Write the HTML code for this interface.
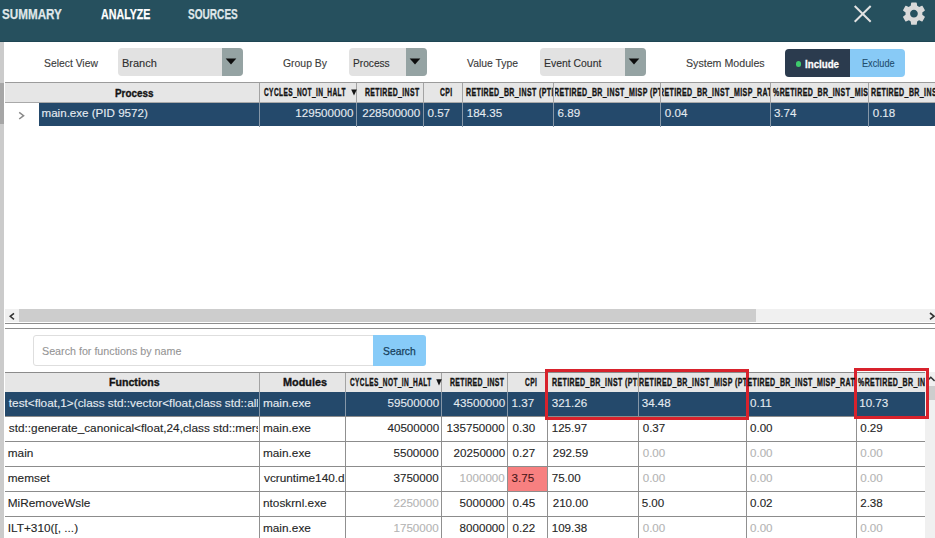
<!DOCTYPE html>
<html><head><meta charset="utf-8">
<style>
*{margin:0;padding:0;box-sizing:border-box}
html,body{width:935px;height:538px;overflow:hidden;background:#fff;font-family:"Liberation Sans", sans-serif;position:relative}
.a{position:absolute}
.t{position:absolute;white-space:nowrap;line-height:1;transform-origin:0 0}
</style></head><body>
<div class="a" style="left:0px;top:0px;width:935px;height:42.2px;background:#26505e;"></div>
<div class="a" style="left:0px;top:41.2px;width:935px;height:1px;background:#1f4654;"></div>
<svg class="a" style="left:850px;top:2px" width="26" height="26" viewBox="0 0 26 26"><path d="M4.7 4.0 L20.7 19.8 M20.7 4.0 L4.7 19.8" stroke="#e2e2e2" stroke-width="2" fill="none"/></svg>
<svg class="a" style="left:0;top:0" width="935" height="30"><path transform="translate(899.9 -0.4) scale(1.17)" fill="#d9d9d9" d="M19.14,12.94c0.04-0.3,0.06-0.61,0.06-0.94c0-0.32-0.02-0.64-0.07-0.94l2.03-1.58c0.18-0.14,0.23-0.41,0.12-0.61 l-1.92-3.32c-0.12-0.22-0.37-0.29-0.59-0.22l-2.39,0.96c-0.5-0.38-1.03-0.7-1.62-0.94L14.4,2.81c-0.04-0.24-0.24-0.41-0.48-0.41 h-3.84c-0.24,0-0.43,0.17-0.47,0.41L9.25,5.35C8.66,5.59,8.12,5.92,7.630,6.29L5.24,5.33c-0.22-0.08-0.47,0-0.59,0.22L2.74,8.87 C2.62,9.08,2.66,9.34,2.86,9.48l2.03,1.58C4.84,11.36,4.8,11.69,4.8,12s0.02,0.64,0.07,0.94l-2.03,1.58 c-0.18,0.14-0.23,0.41-0.12,0.61l1.92,3.32c0.12,0.22,0.37,0.29,0.59,0.22l2.39-0.96c0.5,0.38,1.03,0.7,1.62,0.94l0.36,2.54 c0.05,0.24,0.24,0.41,0.48,0.41h3.84c0.24,0,0.44-0.17,0.47-0.41l0.36-2.54c0.59-0.24,1.130-0.56,1.62-0.94l2.39,0.96 c0.22,0.08,0.47,0,0.59-0.22l1.92-3.32c0.12-0.22,0.07-0.47-0.12-0.61L19.14,12.94z M12,15.3c-1.82,0-3.3-1.48-3.3-3.3 s1.48-3.3,3.3-3.3s3.3,1.48,3.3,3.3S13.82,15.3,12,15.3z"/></svg>
<div class="a" style="left:0px;top:42px;width:4px;height:496px;background:#cbcbcb;"></div>
<div class="a" style="left:0px;top:82.5px;width:4px;height:41px;background:#a6a6a6;"></div>
<div class="a" style="left:118.3px;top:48px;width:124.7px;height:28px;background:#e2e2e2;border-radius:4px;"></div>
<div class="a" style="left:222px;top:48px;width:21px;height:28px;background:#95a3a3;border-radius:0 4px 4px 0;"></div>
<svg class="a" style="left:225.4px;top:58px" width="12" height="8"><path d="M0.7 0.4 L11.3 0.4 L6 6.4 Z" fill="#0d0d0d"/></svg>
<div class="a" style="left:349.1px;top:48px;width:77.69999999999999px;height:28px;background:#e2e2e2;border-radius:4px;"></div>
<div class="a" style="left:405.8px;top:48px;width:21.0px;height:28px;background:#95a3a3;border-radius:0 4px 4px 0;"></div>
<svg class="a" style="left:409.2px;top:58px" width="12" height="8"><path d="M0.7 0.4 L11.3 0.4 L6 6.4 Z" fill="#0d0d0d"/></svg>
<div class="a" style="left:540.1px;top:48px;width:105.89999999999998px;height:28px;background:#e2e2e2;border-radius:4px;"></div>
<div class="a" style="left:625.1px;top:48px;width:20.899999999999977px;height:28px;background:#95a3a3;border-radius:0 4px 4px 0;"></div>
<svg class="a" style="left:628.4499999999999px;top:58px" width="12" height="8"><path d="M0.7 0.4 L11.3 0.4 L6 6.4 Z" fill="#0d0d0d"/></svg>
<div class="a" style="left:785px;top:48.5px;width:65px;height:28px;background:#2b3b4e;border-radius:4px 0 0 4px;"></div>
<div class="a" style="left:850px;top:48.5px;width:55px;height:28px;background:#88caf6;border-radius:0 4px 4px 0;"></div>
<div class="a" style="left:796.2px;top:61.4px;width:5.2px;height:5.2px;border-radius:50%;background:#3ecb6c"></div>
<div class="a" style="left:4.5px;top:82px;width:930.5px;height:1.5px;background:#9b9b9b;"></div>
<div class="a" style="left:4.5px;top:83.2px;width:930.5px;height:18.4px;background:#e6e6e6;"></div>
<div class="a" style="left:4.5px;top:101.5px;width:930.5px;height:1.2px;background:#a9a9a9;"></div>
<div class="a" style="left:38.8px;top:102.5px;width:896.2px;height:23.8px;background:#24496b;"></div>
<div class="a" style="left:259px;top:83px;width:1.2px;height:18.6px;background:#a3a3a3;"></div>
<div class="a" style="left:259px;top:102.5px;width:1.2px;height:24.5px;background:#8697a8;"></div>
<div class="a" style="left:355.8px;top:83px;width:1.2px;height:18.6px;background:#a3a3a3;"></div>
<div class="a" style="left:355.8px;top:102.5px;width:1.2px;height:24.5px;background:#8697a8;"></div>
<div class="a" style="left:422.6px;top:83px;width:1.2px;height:18.6px;background:#a3a3a3;"></div>
<div class="a" style="left:422.6px;top:102.5px;width:1.2px;height:24.5px;background:#8697a8;"></div>
<div class="a" style="left:462.3px;top:83px;width:1.2px;height:18.6px;background:#a3a3a3;"></div>
<div class="a" style="left:462.3px;top:102.5px;width:1.2px;height:24.5px;background:#8697a8;"></div>
<div class="a" style="left:553.2px;top:83px;width:1.2px;height:18.6px;background:#a3a3a3;"></div>
<div class="a" style="left:553.2px;top:102.5px;width:1.2px;height:24.5px;background:#8697a8;"></div>
<div class="a" style="left:660.2px;top:83px;width:1.2px;height:18.6px;background:#a3a3a3;"></div>
<div class="a" style="left:660.2px;top:102.5px;width:1.2px;height:24.5px;background:#8697a8;"></div>
<div class="a" style="left:770.2px;top:83px;width:1.2px;height:18.6px;background:#a3a3a3;"></div>
<div class="a" style="left:770.2px;top:102.5px;width:1.2px;height:24.5px;background:#8697a8;"></div>
<div class="a" style="left:867.8px;top:83px;width:1.2px;height:18.6px;background:#a3a3a3;"></div>
<div class="a" style="left:867.8px;top:102.5px;width:1.2px;height:24.5px;background:#8697a8;"></div>
<svg class="a" style="left:350.6px;top:89.3px" width="7" height="7"><path d="M0.2 0.5 L5.8 0.5 L3.0 6.5 Z" fill="#141414"/></svg>
<svg class="a" style="left:16px;top:109px" width="11" height="13"><path d="M3.2 3.3 L7.6 6.65 L3.2 10" stroke="#8a8a8a" stroke-width="1.5" fill="none"/></svg>
<div class="a" style="left:4.5px;top:309px;width:930.5px;height:13.2px;background:#f0f0f0;"></div>
<div class="a" style="left:19.3px;top:309px;width:736.3px;height:13.2px;background:#cdcdcd;"></div>
<svg class="a" style="left:6px;top:310px" width="12" height="12"><path d="M8 3.3 L4.2 6.3 L8 9.3" stroke="#333" stroke-width="1.5" fill="none"/></svg>
<svg class="a" style="left:925px;top:310px" width="10" height="12"><path d="M5 3 L9 6.2 L5 9.4" stroke="#333" stroke-width="1.7" fill="none"/></svg>
<div class="a" style="left:4.5px;top:323.2px;width:930.5px;height:1.2px;background:#8e8e8e;"></div>
<div class="a" style="left:4.5px;top:327.6px;width:930.5px;height:1.2px;background:#8e8e8e;"></div>
<div class="a" style="left:33.2px;top:334.7px;width:342px;height:31.2px;border:1px solid #dedede;border-radius:3px 0 0 3px;background:#fff"></div>
<div class="a" style="left:373.4px;top:334.8px;width:52.4px;height:31.2px;background:#87cbf8;border-radius:0 3px 3px 0;"></div>
<div class="a" style="left:4.5px;top:371.8px;width:920.5px;height:1.3px;background:#8b8b8b;"></div>
<div class="a" style="left:4.5px;top:373.1px;width:920.5px;height:18.5px;background:#e6e6e6;"></div>
<div class="a" style="left:4.5px;top:391.6px;width:920.5px;height:1px;background:#f2f2f2;"></div>
<div class="a" style="left:4.5px;top:392.3px;width:920.5px;height:24px;background:#24496b;"></div>
<div class="a" style="left:258.9px;top:373px;width:1.3px;height:19px;background:#a3a3a3;"></div>
<div class="a" style="left:258.9px;top:392.3px;width:1.3px;height:24px;background:#8697a8;"></div>
<div class="a" style="left:258.9px;top:416.3px;width:1.1px;height:122px;background:#909090;"></div>
<div class="a" style="left:344.6px;top:373px;width:1.3px;height:19px;background:#a3a3a3;"></div>
<div class="a" style="left:344.6px;top:392.3px;width:1.3px;height:24px;background:#8697a8;"></div>
<div class="a" style="left:344.6px;top:416.3px;width:1.1px;height:122px;background:#909090;"></div>
<div class="a" style="left:440.5px;top:373px;width:1.3px;height:19px;background:#a3a3a3;"></div>
<div class="a" style="left:440.5px;top:392.3px;width:1.3px;height:24px;background:#8697a8;"></div>
<div class="a" style="left:440.5px;top:416.3px;width:1.1px;height:122px;background:#909090;"></div>
<div class="a" style="left:507.0px;top:373px;width:1.3px;height:19px;background:#a3a3a3;"></div>
<div class="a" style="left:507.0px;top:392.3px;width:1.3px;height:24px;background:#8697a8;"></div>
<div class="a" style="left:507.0px;top:416.3px;width:1.1px;height:122px;background:#909090;"></div>
<div class="a" style="left:547px;top:373px;width:1.3px;height:19px;background:#a3a3a3;"></div>
<div class="a" style="left:547px;top:392.3px;width:1.3px;height:24px;background:#8697a8;"></div>
<div class="a" style="left:547px;top:416.3px;width:1.1px;height:122px;background:#909090;"></div>
<div class="a" style="left:638.2px;top:373px;width:1.3px;height:19px;background:#a3a3a3;"></div>
<div class="a" style="left:638.2px;top:392.3px;width:1.3px;height:24px;background:#8697a8;"></div>
<div class="a" style="left:638.2px;top:416.3px;width:1.1px;height:122px;background:#909090;"></div>
<div class="a" style="left:745.8px;top:373px;width:1.3px;height:19px;background:#a3a3a3;"></div>
<div class="a" style="left:745.8px;top:392.3px;width:1.3px;height:24px;background:#8697a8;"></div>
<div class="a" style="left:745.8px;top:416.3px;width:1.1px;height:122px;background:#909090;"></div>
<div class="a" style="left:855.5px;top:373px;width:1.3px;height:19px;background:#a3a3a3;"></div>
<div class="a" style="left:855.5px;top:392.3px;width:1.3px;height:24px;background:#8697a8;"></div>
<div class="a" style="left:855.5px;top:416.3px;width:1.1px;height:122px;background:#909090;"></div>
<div class="a" style="left:4.5px;top:440.7px;width:920.5px;height:1.3px;background:#8c8c8c;"></div>
<div class="a" style="left:4.5px;top:465.7px;width:920.5px;height:1.3px;background:#8c8c8c;"></div>
<div class="a" style="left:4.5px;top:490.7px;width:920.5px;height:1.3px;background:#8c8c8c;"></div>
<div class="a" style="left:4.5px;top:515.6px;width:920.5px;height:1.3px;background:#8c8c8c;"></div>
<div class="a" style="left:4.5px;top:416.0px;width:920.5px;height:0.8px;background:#8c8c8c;"></div>
<div class="a" style="left:508.2px;top:467.3px;width:38.8px;height:23.6px;background:#f78080;"></div>
<svg class="a" style="left:435.8px;top:378.9px" width="7" height="7"><path d="M0.2 0.3 L5.8 0.3 L3.0 6.6 Z" fill="#141414"/></svg>
<div class="a" style="left:925px;top:372px;width:10px;height:166px;background:#f0f0f0;"></div>
<div class="a" style="left:926px;top:386px;width:9px;height:14px;background:#cdcdcd;"></div>
<svg class="a" style="left:925px;top:374px" width="10" height="10"><path d="M2 7 L5.8 3.2 L9.6 7" stroke="#333" stroke-width="1.5" fill="none"/></svg>
<div class="a" style="left:545px;top:369.3px;width:203.6px;height:50.5px;border:3px solid #d8222c"></div>
<div class="a" style="left:853.8px;top:368.2px;width:75.5px;height:51px;border:3px solid #d8222c"></div>
<div class="t" style="left:2.48px;top:6px;font-size:15.2px;font-weight:700;color:#dfe6e9;transform:scaleX(0.7682);-webkit-text-stroke:0.25px #dfe6e9;">SUMMARY</div>
<div class="t" style="left:101.10px;top:6px;font-size:15.2px;font-weight:700;color:#ffffff;transform:scaleX(0.7029);-webkit-text-stroke:0.25px #fff;">ANALYZE</div>
<div class="t" style="left:187.84px;top:6px;font-size:15.2px;font-weight:700;color:#dfe6e9;transform:scaleX(0.6635);-webkit-text-stroke:0.25px #dfe6e9;">SOURCES</div>
<div class="t" style="left:43.66px;top:58px;font-size:11px;font-weight:400;color:#3b3b3b;transform:scaleX(0.9411);-webkit-text-stroke:0.12px #3b3b3b;">Select View</div>
<div class="t" style="left:282.90px;top:58px;font-size:11px;font-weight:400;color:#3b3b3b;transform:scaleX(0.9468);-webkit-text-stroke:0.12px #3b3b3b;">Group By</div>
<div class="t" style="left:467.10px;top:58px;font-size:11px;font-weight:400;color:#3b3b3b;transform:scaleX(0.9426);-webkit-text-stroke:0.12px #3b3b3b;">Value Type</div>
<div class="t" style="left:685.63px;top:58px;font-size:11px;font-weight:400;color:#3b3b3b;transform:scaleX(0.9675);-webkit-text-stroke:0.12px #3b3b3b;">System Modules</div>
<div class="t" style="left:122.00px;top:58px;font-size:11px;font-weight:400;color:#2e2e2e;-webkit-text-stroke:0.12px #2e2e2e;">Branch</div>
<div class="t" style="left:352.78px;top:58px;font-size:11px;font-weight:400;color:#2e2e2e;transform:scaleX(0.9231);-webkit-text-stroke:0.12px #2e2e2e;">Process</div>
<div class="t" style="left:544.05px;top:58px;font-size:11px;font-weight:400;color:#2e2e2e;transform:scaleX(0.9467);-webkit-text-stroke:0.12px #2e2e2e;">Event Count</div>
<div class="t" style="left:804.82px;top:59px;font-size:11px;font-weight:700;color:#ffffff;transform:scaleX(0.8838);-webkit-text-stroke:0.3px #fff;">Include</div>
<div class="t" style="left:862.17px;top:58px;font-size:11px;font-weight:400;color:#1f4d6d;transform:scaleX(0.8342);-webkit-text-stroke:0.12px #1f4d6d;">Exclude</div>
<div class="t" style="left:114.90px;top:88px;font-size:11px;font-weight:700;color:#141414;transform:scaleX(0.8976);-webkit-text-stroke:0.35px #141414;">Process</div>
<div class="t" style="left:264.40px;top:88px;font-size:10.3px;font-weight:700;color:#141414;letter-spacing:0.6px;transform:scaleX(0.6375);-webkit-text-stroke:0.35px #141414;">CYCLES_NOT_IN_HALT</div>
<div class="t" style="left:364.83px;top:88px;font-size:10.3px;font-weight:700;color:#141414;letter-spacing:0.6px;transform:scaleX(0.6687);-webkit-text-stroke:0.35px #141414;">RETIRED_INST</div>
<div class="t" style="left:439.60px;top:88px;font-size:10.3px;font-weight:700;color:#141414;letter-spacing:0.6px;transform:scaleX(0.6611);-webkit-text-stroke:0.35px #141414;">CPI</div>
<div class="a" style="left:463.8px;top:83px;width:89.40px;height:18px;overflow:hidden"><div class="t" style="left:2.32px;top:5px;font-size:10.3px;font-weight:700;color:#141414;letter-spacing:0.6px;transform:scaleX(0.6800);-webkit-text-stroke:0.35px #141414;">RETIRED_BR_INST (PTI_INST)</div></div>
<div class="a" style="left:554.7px;top:83px;width:105.50px;height:18px;overflow:hidden"><div class="t" style="left:-0.78px;top:5px;font-size:10.3px;font-weight:700;color:#141414;letter-spacing:0.6px;transform:scaleX(0.6800);-webkit-text-stroke:0.35px #141414;">RETIRED_BR_INST_MISP (PTI_INST)</div></div>
<div class="a" style="left:661.7px;top:83px;width:108.50px;height:18px;overflow:hidden"><div class="t" style="left:-3.08px;top:5px;font-size:10.3px;font-weight:700;color:#141414;letter-spacing:0.6px;transform:scaleX(0.6800);-webkit-text-stroke:0.35px #141414;">RETIRED_BR_INST_MISP_RATIO</div></div>
<div class="a" style="left:771.7px;top:83px;width:96.10px;height:18px;overflow:hidden"><div class="t" style="left:1.60px;top:5px;font-size:10.3px;font-weight:700;color:#141414;letter-spacing:0.6px;transform:scaleX(0.6800);-webkit-text-stroke:0.35px #141414;">%RETIRED_BR_INST_MISP</div></div>
<div class="a" style="left:869.3px;top:83px;width:65.70px;height:18px;overflow:hidden"><div class="t" style="left:2.02px;top:5px;font-size:10.3px;font-weight:700;color:#141414;letter-spacing:0.6px;transform:scaleX(0.6800);-webkit-text-stroke:0.35px #141414;">RETIRED_BR_INST (PTI_INST)</div></div>
<div class="t" style="left:41.50px;top:107px;font-size:11.6px;font-weight:400;color:#e4ebf1;-webkit-text-stroke:0.12px #e4ebf1;">main.exe (PID 9572)</div>
<div class="t" style="left:295.30px;top:107px;font-size:11.6px;font-weight:400;color:#e4ebf1;-webkit-text-stroke:0.12px #e4ebf1;">129500000</div>
<div class="t" style="left:362.20px;top:107px;font-size:11.6px;font-weight:400;color:#e4ebf1;-webkit-text-stroke:0.12px #e4ebf1;">228500000</div>
<div class="t" style="left:427.50px;top:107px;font-size:11.6px;font-weight:400;color:#e4ebf1;-webkit-text-stroke:0.12px #e4ebf1;">0.57</div>
<div class="t" style="left:466.70px;top:107px;font-size:11.6px;font-weight:400;color:#e4ebf1;-webkit-text-stroke:0.12px #e4ebf1;">184.35</div>
<div class="t" style="left:557.60px;top:107px;font-size:11.6px;font-weight:400;color:#e4ebf1;-webkit-text-stroke:0.12px #e4ebf1;">6.89</div>
<div class="t" style="left:664.80px;top:107px;font-size:11.6px;font-weight:400;color:#e4ebf1;-webkit-text-stroke:0.12px #e4ebf1;">0.04</div>
<div class="t" style="left:773.90px;top:107px;font-size:11.6px;font-weight:400;color:#e4ebf1;-webkit-text-stroke:0.12px #e4ebf1;">3.74</div>
<div class="t" style="left:872.70px;top:107px;font-size:11.6px;font-weight:400;color:#e4ebf1;-webkit-text-stroke:0.12px #e4ebf1;">0.18</div>
<div class="t" style="left:42.23px;top:346px;font-size:11px;font-weight:400;color:#959595;transform:scaleX(0.9739);-webkit-text-stroke:0.1px #959595;">Search for functions by name</div>
<div class="t" style="left:383.06px;top:346px;font-size:11px;font-weight:400;color:#173f5c;transform:scaleX(0.9394);-webkit-text-stroke:0.25px #173f5c;">Search</div>
<div class="t" style="left:108.94px;top:377px;font-size:11px;font-weight:700;color:#141414;transform:scaleX(0.9647);-webkit-text-stroke:0.35px #141414;">Functions</div>
<div class="t" style="left:282.61px;top:377px;font-size:11px;font-weight:700;color:#141414;transform:scaleX(0.9860);-webkit-text-stroke:0.35px #141414;">Modules</div>
<div class="t" style="left:349.90px;top:378px;font-size:10.3px;font-weight:700;color:#141414;letter-spacing:0.6px;transform:scaleX(0.6352);-webkit-text-stroke:0.35px #141414;">CYCLES_NOT_IN_HALT</div>
<div class="t" style="left:450.33px;top:378px;font-size:10.3px;font-weight:700;color:#141414;letter-spacing:0.6px;transform:scaleX(0.6675);-webkit-text-stroke:0.35px #141414;">RETIRED_INST</div>
<div class="t" style="left:524.90px;top:378px;font-size:10.3px;font-weight:700;color:#141414;letter-spacing:0.6px;transform:scaleX(0.6444);-webkit-text-stroke:0.35px #141414;">CPI</div>
<div class="a" style="left:548.3px;top:373px;width:89.90px;height:18px;overflow:hidden"><div class="t" style="left:3.42px;top:5px;font-size:10.3px;font-weight:700;color:#141414;letter-spacing:0.6px;transform:scaleX(0.6800);-webkit-text-stroke:0.35px #141414;">RETIRED_BR_INST (PTI_INST)</div></div>
<div class="a" style="left:639.2px;top:373px;width:106.60px;height:18px;overflow:hidden"><div class="t" style="left:-0.08px;top:5px;font-size:10.3px;font-weight:700;color:#141414;letter-spacing:0.6px;transform:scaleX(0.6800);-webkit-text-stroke:0.35px #141414;">RETIRED_BR_INST_MISP (PTI_INST)</div></div>
<div class="a" style="left:747.1px;top:373px;width:108.40px;height:18px;overflow:hidden"><div class="t" style="left:-5.28px;top:5px;font-size:10.3px;font-weight:700;color:#141414;letter-spacing:0.6px;transform:scaleX(0.6800);-webkit-text-stroke:0.35px #141414;">RETIRED_BR_INST_MISP_RATIO</div></div>
<div class="a" style="left:856.8px;top:373px;width:68.20px;height:18px;overflow:hidden"><div class="t" style="left:1.20px;top:5px;font-size:10.3px;font-weight:700;color:#141414;letter-spacing:0.6px;transform:scaleX(0.6800);-webkit-text-stroke:0.35px #141414;">%RETIRED_BR_INST_MISP</div></div>
<div class="a" style="left:4.5px;top:392.3px;width:253.70px;height:24.5px;overflow:hidden"><div class="t" style="left:4.30px;top:5.699999999999989px;font-size:11.8px;font-weight:400;color:#e4ebf1;-webkit-text-stroke:0.12px #e4ebf1;">test&lt;float,1&gt;(class std::vector&lt;float,class std::allocator&lt;float&gt; &gt; &amp;)</div></div>
<div class="a" style="left:260.2px;top:392.3px;width:84.40px;height:24.5px;overflow:hidden"><div class="t" style="left:2.80px;top:5.699999999999989px;font-size:11.8px;font-weight:400;color:#e4ebf1;-webkit-text-stroke:0.12px #e4ebf1;">main.exe</div></div>
<div class="t" style="left:387.50px;top:397px;font-size:11.6px;font-weight:400;color:#e4ebf1;-webkit-text-stroke:0.12px #e4ebf1;">59500000</div>
<div class="t" style="left:453.60px;top:397px;font-size:11.6px;font-weight:400;color:#e4ebf1;-webkit-text-stroke:0.12px #e4ebf1;">43500000</div>
<div class="t" style="left:511.60px;top:397px;font-size:11.6px;font-weight:400;color:#e4ebf1;-webkit-text-stroke:0.12px #e4ebf1;">1.37</div>
<div class="t" style="left:551.70px;top:397px;font-size:11.6px;font-weight:400;color:#e4ebf1;-webkit-text-stroke:0.12px #e4ebf1;">321.26</div>
<div class="t" style="left:641.70px;top:397px;font-size:11.6px;font-weight:400;color:#e4ebf1;-webkit-text-stroke:0.12px #e4ebf1;">34.48</div>
<div class="t" style="left:750.00px;top:397px;font-size:11.6px;font-weight:400;color:#e4ebf1;-webkit-text-stroke:0.12px #e4ebf1;">0.11</div>
<div class="t" style="left:859.20px;top:397px;font-size:11.6px;font-weight:400;color:#e4ebf1;-webkit-text-stroke:0.12px #e4ebf1;">10.73</div>
<div class="a" style="left:4.5px;top:416.5px;width:253.70px;height:24.5px;overflow:hidden"><div class="t" style="left:4.30px;top:6.5px;font-size:11.8px;font-weight:400;color:#262626;-webkit-text-stroke:0.12px #262626;">std::generate_canonical&lt;float,24,class std::mersenne_twister_engine&gt;</div></div>
<div class="a" style="left:260.2px;top:416.5px;width:84.40px;height:24.5px;overflow:hidden"><div class="t" style="left:2.80px;top:6.5px;font-size:11.8px;font-weight:400;color:#262626;-webkit-text-stroke:0.12px #262626;">main.exe</div></div>
<div class="t" style="left:387.50px;top:422px;font-size:11.6px;font-weight:400;color:#262626;-webkit-text-stroke:0.12px #262626;">40500000</div>
<div class="t" style="left:446.60px;top:422px;font-size:11.6px;font-weight:400;color:#262626;-webkit-text-stroke:0.12px #262626;">135750000</div>
<div class="t" style="left:512.60px;top:422px;font-size:11.6px;font-weight:400;color:#262626;-webkit-text-stroke:0.12px #262626;">0.30</div>
<div class="t" style="left:551.70px;top:422px;font-size:11.6px;font-weight:400;color:#262626;-webkit-text-stroke:0.12px #262626;">125.97</div>
<div class="t" style="left:642.70px;top:422px;font-size:11.6px;font-weight:400;color:#262626;-webkit-text-stroke:0.12px #262626;">0.37</div>
<div class="t" style="left:750.00px;top:422px;font-size:11.6px;font-weight:400;color:#262626;-webkit-text-stroke:0.12px #262626;">0.00</div>
<div class="t" style="left:860.20px;top:422px;font-size:11.6px;font-weight:400;color:#262626;-webkit-text-stroke:0.12px #262626;">0.29</div>
<div class="a" style="left:4.5px;top:441.3px;width:253.70px;height:24.5px;overflow:hidden"><div class="t" style="left:3.30px;top:6.699999999999989px;font-size:11.8px;font-weight:400;color:#262626;-webkit-text-stroke:0.12px #262626;">main</div></div>
<div class="a" style="left:260.2px;top:441.3px;width:84.40px;height:24.5px;overflow:hidden"><div class="t" style="left:2.80px;top:6.699999999999989px;font-size:11.8px;font-weight:400;color:#262626;-webkit-text-stroke:0.12px #262626;">main.exe</div></div>
<div class="t" style="left:393.50px;top:447px;font-size:11.6px;font-weight:400;color:#262626;-webkit-text-stroke:0.12px #262626;">5500000</div>
<div class="t" style="left:453.60px;top:447px;font-size:11.6px;font-weight:400;color:#262626;-webkit-text-stroke:0.12px #262626;">20250000</div>
<div class="t" style="left:512.60px;top:447px;font-size:11.6px;font-weight:400;color:#262626;-webkit-text-stroke:0.12px #262626;">0.27</div>
<div class="t" style="left:552.70px;top:447px;font-size:11.6px;font-weight:400;color:#262626;-webkit-text-stroke:0.12px #262626;">292.59</div>
<div class="t" style="left:642.70px;top:447px;font-size:11.6px;font-weight:400;color:#b4b4b4;-webkit-text-stroke:0.12px #b4b4b4;">0.00</div>
<div class="t" style="left:750.00px;top:447px;font-size:11.6px;font-weight:400;color:#b4b4b4;-webkit-text-stroke:0.12px #b4b4b4;">0.00</div>
<div class="t" style="left:860.20px;top:447px;font-size:11.6px;font-weight:400;color:#b4b4b4;-webkit-text-stroke:0.12px #b4b4b4;">0.00</div>
<div class="a" style="left:4.5px;top:466.3px;width:253.70px;height:24.5px;overflow:hidden"><div class="t" style="left:3.30px;top:6.699999999999989px;font-size:11.8px;font-weight:400;color:#262626;-webkit-text-stroke:0.12px #262626;">memset</div></div>
<div class="a" style="left:260.2px;top:466.3px;width:84.40px;height:24.5px;overflow:hidden"><div class="t" style="left:3.80px;top:6.699999999999989px;font-size:11.8px;font-weight:400;color:#262626;-webkit-text-stroke:0.12px #262626;">vcruntime140.dll</div></div>
<div class="t" style="left:393.50px;top:472px;font-size:11.6px;font-weight:400;color:#262626;-webkit-text-stroke:0.12px #262626;">3750000</div>
<div class="t" style="left:459.60px;top:472px;font-size:11.6px;font-weight:400;color:#b4b4b4;-webkit-text-stroke:0.12px #b4b4b4;">1000000</div>
<div class="t" style="left:511.60px;top:472px;font-size:11.6px;font-weight:400;color:#4a1818;-webkit-text-stroke:0.12px #4a1818;">3.75</div>
<div class="t" style="left:551.70px;top:472px;font-size:11.6px;font-weight:400;color:#262626;-webkit-text-stroke:0.12px #262626;">75.00</div>
<div class="t" style="left:642.70px;top:472px;font-size:11.6px;font-weight:400;color:#b4b4b4;-webkit-text-stroke:0.12px #b4b4b4;">0.00</div>
<div class="t" style="left:750.00px;top:472px;font-size:11.6px;font-weight:400;color:#b4b4b4;-webkit-text-stroke:0.12px #b4b4b4;">0.00</div>
<div class="t" style="left:860.20px;top:472px;font-size:11.6px;font-weight:400;color:#b4b4b4;-webkit-text-stroke:0.12px #b4b4b4;">0.00</div>
<div class="a" style="left:4.5px;top:491.3px;width:253.70px;height:24.499999999999943px;overflow:hidden"><div class="t" style="left:3.30px;top:6.699999999999989px;font-size:11.8px;font-weight:400;color:#262626;-webkit-text-stroke:0.12px #262626;">MiRemoveWsle</div></div>
<div class="a" style="left:260.2px;top:491.3px;width:84.40px;height:24.499999999999943px;overflow:hidden"><div class="t" style="left:2.80px;top:6.699999999999989px;font-size:11.8px;font-weight:400;color:#262626;-webkit-text-stroke:0.12px #262626;">ntoskrnl.exe</div></div>
<div class="t" style="left:393.50px;top:497px;font-size:11.6px;font-weight:400;color:#b4b4b4;-webkit-text-stroke:0.12px #b4b4b4;">2250000</div>
<div class="t" style="left:459.60px;top:497px;font-size:11.6px;font-weight:400;color:#262626;-webkit-text-stroke:0.12px #262626;">5000000</div>
<div class="t" style="left:512.60px;top:497px;font-size:11.6px;font-weight:400;color:#262626;-webkit-text-stroke:0.12px #262626;">0.45</div>
<div class="t" style="left:552.70px;top:497px;font-size:11.6px;font-weight:400;color:#262626;-webkit-text-stroke:0.12px #262626;">210.00</div>
<div class="t" style="left:641.70px;top:497px;font-size:11.6px;font-weight:400;color:#262626;-webkit-text-stroke:0.12px #262626;">5.00</div>
<div class="t" style="left:750.00px;top:497px;font-size:11.6px;font-weight:400;color:#262626;-webkit-text-stroke:0.12px #262626;">0.02</div>
<div class="t" style="left:860.20px;top:497px;font-size:11.6px;font-weight:400;color:#262626;-webkit-text-stroke:0.12px #262626;">2.38</div>
<div class="a" style="left:4.5px;top:516.2px;width:253.70px;height:24.5px;overflow:hidden"><div class="t" style="left:3.30px;top:6.7999999999999545px;font-size:11.8px;font-weight:400;color:#262626;-webkit-text-stroke:0.12px #262626;">ILT+310([, ...)</div></div>
<div class="a" style="left:260.2px;top:516.2px;width:84.40px;height:24.5px;overflow:hidden"><div class="t" style="left:2.80px;top:6.7999999999999545px;font-size:11.8px;font-weight:400;color:#262626;-webkit-text-stroke:0.12px #262626;">main.exe</div></div>
<div class="t" style="left:393.50px;top:522px;font-size:11.6px;font-weight:400;color:#b4b4b4;-webkit-text-stroke:0.12px #b4b4b4;">1750000</div>
<div class="t" style="left:459.60px;top:522px;font-size:11.6px;font-weight:400;color:#262626;-webkit-text-stroke:0.12px #262626;">8000000</div>
<div class="t" style="left:512.60px;top:522px;font-size:11.6px;font-weight:400;color:#262626;-webkit-text-stroke:0.12px #262626;">0.22</div>
<div class="t" style="left:551.70px;top:522px;font-size:11.6px;font-weight:400;color:#262626;-webkit-text-stroke:0.12px #262626;">109.38</div>
<div class="t" style="left:642.70px;top:522px;font-size:11.6px;font-weight:400;color:#b4b4b4;-webkit-text-stroke:0.12px #b4b4b4;">0.00</div>
<div class="t" style="left:750.00px;top:522px;font-size:11.6px;font-weight:400;color:#b4b4b4;-webkit-text-stroke:0.12px #b4b4b4;">0.00</div>
<div class="t" style="left:860.20px;top:522px;font-size:11.6px;font-weight:400;color:#b4b4b4;-webkit-text-stroke:0.12px #b4b4b4;">0.00</div>

</body></html>
